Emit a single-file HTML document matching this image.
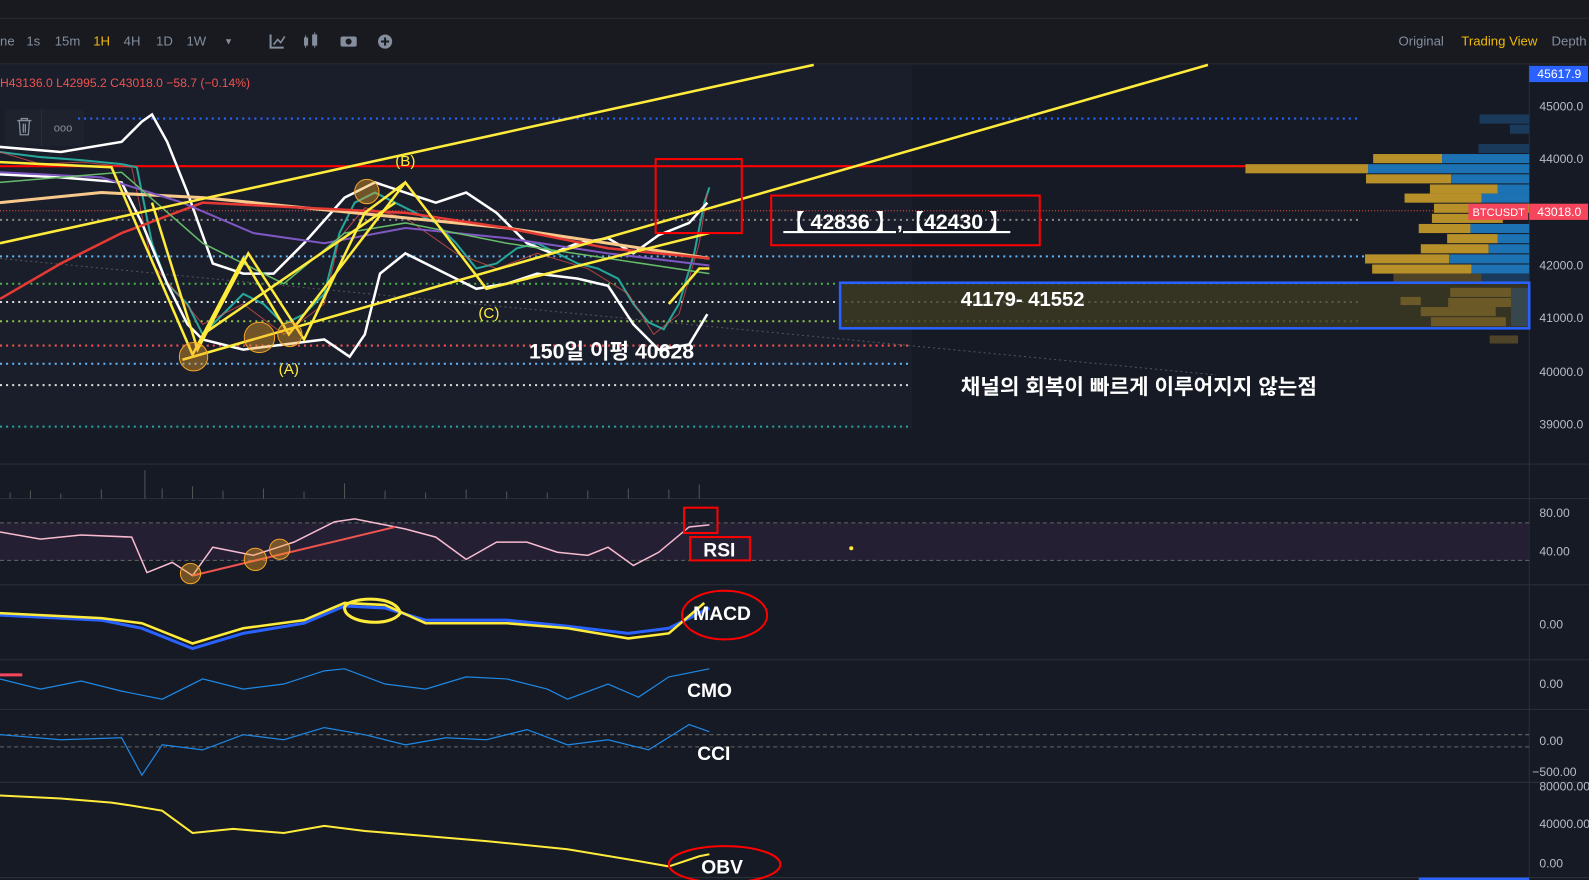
<!DOCTYPE html>
<html><head><meta charset="utf-8"><style>
html,body{margin:0;padding:0;background:#161a25;width:1589px;height:880px;overflow:hidden;font-family:"Liberation Sans","Noto Sans CJK KR",sans-serif}
svg{position:absolute;left:0;top:0;font-family:"Liberation Sans","Noto Sans CJK KR",sans-serif}
</style></head><body>
<svg width="1589" height="880" viewBox="0 0 1568 868.4" preserveAspectRatio="none">
<rect x="0" y="0" width="1568" height="63" fill="#181a20"/>
<line x1="0" y1="18" x2="1568" y2="18" stroke="#2b2f36"/><line x1="0" y1="63" x2="1568" y2="63" stroke="#2b2f36"/>
<g font-size="13" fill="#848e9c"><text x="0" y="45">ne</text><text x="26" y="45">1s</text><text x="54" y="45">15m</text><text x="92" y="45" fill="#f0b90b">1H</text><text x="122" y="45">4H</text><text x="154" y="45">1D</text><text x="184" y="45">1W</text><text x="221" y="44" font-size="9">▼</text>
<text x="1380" y="45">Original</text><text x="1442" y="45" fill="#f0b90b">Trading View</text><text x="1531" y="45">Depth</text></g>
<g fill="#848e9c"><path d="M267 34v13h13" stroke="#848e9c" stroke-width="2" fill="none"/><path d="M270 44l4-5 3 3 4-6" stroke="#848e9c" stroke-width="1.6" fill="none"/>
<rect x="300" y="37" width="4" height="8"/><rect x="308" y="34" width="5" height="11"/><rect x="301" y="35" width="1" height="12"/><rect x="310" y="32" width="1" height="15"/>
<rect x="336" y="36" width="16" height="10" rx="2"/><circle cx="344" cy="41" r="3" fill="#181a20"/>
<circle cx="380" cy="41" r="7"/><path d="M380 37v8M376 41h8" stroke="#181a20" stroke-width="2"/></g>
<rect x="0" y="64" width="1509" height="395" fill="#161a25"/>
<rect x="0" y="64" width="900" height="360" fill="#1a1e2a"/>
<line x1="1509" y1="64" x2="1509" y2="880" stroke="#2b2f36"/>
<g stroke="#2b2f36"><line x1="0" y1="458" x2="1568" y2="458"/><line x1="0" y1="492" x2="1568" y2="492"/><line x1="0" y1="577" x2="1568" y2="577"/><line x1="0" y1="651" x2="1568" y2="651"/><line x1="0" y1="700" x2="1568" y2="700"/><line x1="0" y1="772" x2="1568" y2="772"/><line x1="0" y1="866" x2="1568" y2="866"/></g>
<text x="0" y="86" font-size="12" fill="#ef5350">H43136.0 L42995.2 C43018.0 −58.7 (−0.14%)</text>
<rect x="5" y="108" width="78" height="36" rx="3" fill="#1e222d"/>
<g stroke="#848e9c" stroke-width="1.3" fill="none"><path d="M17 119h14M21 119v-2h6v2M19 119l1 14h8l1-14M23 122v9M25 122v9"/></g>
<line x1="41" y1="108" x2="41" y2="144" stroke="#2b2f36"/>
<text x="53" y="130" font-size="11" fill="#848e9c">ooo</text>
<g stroke-width="2" stroke-dasharray="2 4" fill="none">
<line x1="77" y1="117" x2="1340" y2="117" stroke="#2962ff"/>
<line x1="0" y1="217" x2="1340" y2="217" stroke="#888"/>
<line x1="0" y1="253" x2="1350" y2="253" stroke="#64b5f6"/>
<line x1="0" y1="298" x2="1340" y2="298" stroke="#ddd"/>
<line x1="0" y1="317" x2="1340" y2="317" stroke="#8bc34a"/>
<line x1="0" y1="341" x2="900" y2="341" stroke="#ef5350"/>
<line x1="0" y1="359" x2="900" y2="359" stroke="#64b5f6"/>
<line x1="0" y1="380" x2="900" y2="380" stroke="#ddd"/>
<line x1="0" y1="421" x2="900" y2="421" stroke="#26a69a"/>
<line x1="0" y1="280" x2="1340" y2="280" stroke="#4caf50"/>
</g>
<line x1="0" y1="208" x2="1450" y2="208" stroke="#ef5350" stroke-dasharray="1 2"/>
<line x1="0" y1="164" x2="1509" y2="164" stroke="#f00" stroke-width="2"/>
<line x1="0" y1="255" x2="1200" y2="370" stroke="#555" stroke-dasharray="2 3"/>
<g>
<rect x="1355" y="152" width="68" height="9" fill="#b8902a"/><rect x="1423" y="152" width="86" height="9" fill="#1c72b3"/>
<rect x="1229" y="162" width="121" height="9" fill="#b8902a"/><rect x="1350" y="162" width="159" height="9" fill="#1c72b3"/>
<rect x="1348" y="172" width="84" height="9" fill="#b8902a"/><rect x="1432" y="172" width="77" height="9" fill="#1c72b3"/>
<rect x="1411" y="182" width="67" height="9" fill="#b8902a"/><rect x="1478" y="182" width="31" height="9" fill="#1c72b3"/>
<rect x="1386" y="191" width="76" height="9" fill="#b8902a"/><rect x="1462" y="191" width="47" height="9" fill="#1c72b3"/>
<rect x="1415" y="201" width="94" height="9" fill="#b8902a"/>
<rect x="1413" y="211" width="70" height="9" fill="#b8902a"/>
<rect x="1400" y="221" width="51" height="9" fill="#b8902a"/><rect x="1451" y="221" width="58" height="9" fill="#1c72b3"/>
<rect x="1428" y="231" width="50" height="9" fill="#b8902a"/><rect x="1478" y="231" width="31" height="9" fill="#1c72b3"/>
<rect x="1402" y="241" width="67" height="9" fill="#b8902a"/><rect x="1469" y="241" width="40" height="9" fill="#1c72b3"/>
<rect x="1347" y="251" width="83" height="9" fill="#b8902a"/><rect x="1430" y="251" width="79" height="9" fill="#1c72b3"/>
<rect x="1354" y="261" width="98" height="9" fill="#b8902a"/><rect x="1452" y="261" width="57" height="9" fill="#1c72b3"/>
<rect x="1375" y="270" width="87" height="8" fill="#4f4328"/><rect x="1462" y="270" width="47" height="8" fill="#1a3a5c"/>
<rect x="1460" y="113" width="49" height="9" fill="#1a3a5c"/><rect x="1490" y="123" width="19" height="9" fill="#1a3a5c"/><rect x="1459" y="142" width="50" height="9" fill="#1a3a5c"/>
</g>
<rect x="829" y="279" width="680" height="45" fill="#3d3a22" opacity="0.8"/>
<g fill="#6b5a28"><rect x="1431" y="284" width="60" height="9"/><rect x="1429" y="294" width="66" height="9"/><rect x="1402" y="303" width="74" height="9"/><rect x="1412" y="313" width="74" height="9"/></g>
<rect x="1382" y="293" width="20" height="8" fill="#6b5a28"/><rect x="1491" y="284" width="18" height="38" fill="#37474f"/>
<rect x="1470" y="331" width="28" height="8" fill="#4f4328"/>
<rect x="829" y="279" width="680" height="45" fill="none" stroke="#2962ff" stroke-width="2.5"/>
<path d="M0 150 L40 155 L80 158 L120 162 L135 165 L150 240 L165 280 L185 300 L200 330 L220 310 L240 290 L260 300 L280 320 L300 310 L320 290 L335 230 L350 200 L370 190 L390 200 L410 210 L430 220 L450 240 L470 265 L490 260 L510 245 L530 240 L550 250 L570 260 L590 265 L610 275 L625 300 L640 318 L655 325 L670 300 L685 250 L695 200 L700 185" stroke="#26a69a" stroke-width="2" fill="none"/>
<path d="M0 150 L40 162 L80 160 L130 165 L150 260 L175 290 L200 320 L240 300 L280 330 L320 300 L335 235 L360 205 L400 215 L450 250 L490 265 L530 250 L580 265 L620 290 L645 330 L670 310 L690 240 L698 190" stroke="#ef5350" stroke-width="1" fill="none" opacity="0.7"/>
<path d="M0 145 L60 150 L120 140 L140 120 L150 113 L165 140 L185 190 L210 260 L240 270 L270 270 L300 240 L340 195 L370 180 L400 190 L430 200 L460 190 L490 210 L520 240 L545 250 L570 240 L600 235 L625 250 L650 232 L680 220 L698 200" stroke="#fff" stroke-width="2.5" fill="none"/>
<path d="M0 172 L60 175 L120 180 L140 220 L165 280 L185 320 L200 335 L240 345 L280 340 L320 335 L345 352 L360 330 L375 270 L400 250 L440 270 L470 285 L500 280 L530 270 L570 275 L600 282 L625 320 L650 345 L680 340 L698 310" stroke="#fff" stroke-width="2.5" fill="none"/>
<path d="M0 200 L100 190 L200 195 L300 205 L400 215 L500 225 L600 240 L700 255" stroke="#f8c98a" stroke-width="3" fill="none"/>
<path d="M0 295 L60 260 L120 230 L200 200 L300 205 L400 210 L500 225 L600 245 L700 255" stroke="#e53935" stroke-width="2.5" fill="none"/>
<path d="M0 170 L100 175 L180 200 L250 230 L320 240 L400 225 L500 235 L600 250 L700 262" stroke="#7e57c2" stroke-width="2" fill="none"/>
<path d="M0 180 L120 170 L200 240 L280 280 L340 230 L400 220 L500 240 L600 255 L700 270" stroke="#66bb6a" stroke-width="1.5" fill="none"/>
<g stroke="#ffeb3b" stroke-width="2.5" fill="none">
<line x1="0" y1="240" x2="803" y2="64"/>
<line x1="180" y1="355" x2="1192" y2="64"/>
<path d="M0 160 L110 165 L190 350 L240 255 L285 330 L400 180 L480 285 L700 230"/>
<path d="M150 200 L195 345 L245 250 L300 335 L360 210 L400 180"/>
<line x1="200" y1="330" x2="390" y2="200"/>
<path d="M660 300 L690 265 L700 265"/>
</g>
<g fill="#f5a623" fill-opacity="0.4" stroke="#f5a623"><circle cx="191" cy="352" r="14"/><circle cx="256" cy="333" r="15"/><circle cx="286" cy="330" r="12"/><circle cx="362" cy="189" r="12"/></g>
<g fill="#ffeb3b" font-size="15"><text x="390" y="164">(B)</text><text x="472" y="314">(C)</text><text x="275" y="369">(A)</text></g>
<rect x="647" y="157" width="85" height="73" fill="none" stroke="#f00" stroke-width="2"/>
<rect x="761" y="193" width="265" height="49" fill="none" stroke="#f00" stroke-width="2"/>
<text x="773" y="226" font-size="21" fill="#fff" font-weight="bold" text-decoration="underline">【 42836 】,【42430 】</text>
<text x="948" y="302" font-size="20" fill="#fff" font-weight="bold">41179- 41552</text>
<text x="522" y="354" font-size="21" fill="#fff" font-weight="bold">150일 이평 40628</text>
<text x="948" y="389" font-size="21" fill="#fff" font-weight="bold">채널의 회복이 빠르게 이루어지지 않는점</text>
<g font-size="12" fill="#b7bdc6"><text x="1519" y="109">45000.0</text><text x="1519" y="161">44000.0</text><text x="1519" y="266">42000.0</text><text x="1519" y="318">41000.0</text><text x="1519" y="371">40000.0</text><text x="1519" y="423">39000.0</text>
<text x="1519" y="510">80.00</text><text x="1519" y="548">40.00</text><text x="1519" y="620">0.00</text><text x="1519" y="679">0.00</text><text x="1519" y="735">0.00</text><text x="1512" y="766">−500.00</text><text x="1519" y="780">80000.00</text><text x="1519" y="817">40000.00</text><text x="1519" y="856">0.00</text></g>
<rect x="1509" y="65" width="58" height="16" fill="#2962ff"/><text x="1517" y="77" font-size="12" fill="#fff">45617.9</text>
<rect x="1509" y="201" width="58" height="16" fill="#f6465d"/><text x="1517" y="213" font-size="12" fill="#fff">43018.0</text>
<rect x="1449" y="201" width="59" height="16" fill="#f6465d"/><text x="1453" y="213" font-size="11" fill="#fff">BTCUSDT</text>
<g stroke="#555" stroke-width="1"><path d="M10 492v-6M30 492v-8M60 492v-5M100 492v-9M143 492v-28M160 492v-10M190 492v-12M220 492v-8M260 492v-10M300 492v-7M340 492v-15M380 492v-8M420 492v-6M460 492v-9M500 492v-7M540 492v-6M580 492v-8M620 492v-10M660 492v-9M690 492v-14"/></g>
<rect x="0" y="516" width="1509" height="37" fill="#241f33"/>
<line x1="0" y1="516" x2="1509" y2="516" stroke="#666" stroke-dasharray="4 3"/><line x1="0" y1="553" x2="1509" y2="553" stroke="#666" stroke-dasharray="4 3"/>
<path d="M0 525 L40 532 L80 528 L130 530 L145 565 L170 555 L190 568 L210 540 L250 548 L290 535 L330 515 L350 512 L380 518 L400 522 L430 530 L460 552 L490 535 L520 535 L550 545 L580 548 L600 540 L625 558 L650 545 L680 520 L700 518" stroke="#f8bbd0" stroke-width="1.5" fill="none"/>
<line x1="190" y1="568" x2="390" y2="520" stroke="#ef5350" stroke-width="2"/>
<g fill="#f5a623" fill-opacity="0.4" stroke="#f5a623"><circle cx="188" cy="566" r="10"/><circle cx="252" cy="552" r="11"/><circle cx="276" cy="542" r="10"/></g>
<rect x="675" y="501" width="33" height="25" fill="none" stroke="#f00" stroke-width="2"/>
<rect x="681" y="530" width="59" height="23" fill="none" stroke="#f00" stroke-width="2"/>
<text x="694" y="549" font-size="19" fill="#fff" font-weight="bold">RSI</text>
<circle cx="840" cy="541" r="2" fill="#ffeb3b"/>
<path d="M0 607 L100 612 L140 620 L190 640 L240 625 L300 615 L340 598 L380 600 L420 612 L500 612 L560 618 L620 625 L660 620 L700 600" stroke="#2962ff" stroke-width="3" fill="none"/>
<path d="M0 605 L100 610 L140 615 L190 635 L240 620 L300 612 L340 595 L380 597 L420 615 L500 615 L560 620 L620 630 L660 625 L695 595" stroke="#ffeb3b" stroke-width="2.5" fill="none"/>
<path d="M340 600 C340 590 390 585 395 605 C385 620 340 615 340 600" stroke="#ffeb3b" stroke-width="3" fill="none"/>
<ellipse cx="715" cy="607" rx="42" ry="24" fill="none" stroke="#f00" stroke-width="2"/>
<text x="684" y="612" font-size="19" fill="#fff" font-weight="bold">MACD</text>
<path d="M0 670 L40 680 L80 672 L120 682 L160 690 L200 670 L240 680 L280 675 L320 662 L340 660 L380 675 L420 680 L460 668 L500 670 L540 680 L560 690 L600 675 L630 688 L660 668 L700 660" stroke="#1e88e5" stroke-width="1.2" fill="none"/>
<line x1="0" y1="666" x2="22" y2="666" stroke="#f6465d" stroke-width="3"/>
<text x="678" y="688" font-size="19" fill="#fff" font-weight="bold">CMO</text>
<line x1="0" y1="725" x2="1509" y2="725" stroke="#666" stroke-dasharray="4 3"/><line x1="0" y1="737" x2="1509" y2="737" stroke="#666" stroke-dasharray="4 3"/>
<path d="M0 725 L60 730 L120 728 L140 765 L160 735 L200 740 L240 725 L280 730 L320 718 L360 725 L400 735 L440 728 L480 730 L520 720 L560 735 L600 730 L640 740 L680 715 L700 722" stroke="#1e88e5" stroke-width="1.2" fill="none"/>
<text x="688" y="750" font-size="19" fill="#fff" font-weight="bold">CCI</text>
<path d="M0 785 L60 788 L110 792 L130 795 L160 800 L190 822 L230 818 L280 822 L320 815 L360 820 L420 825 L480 830 L560 838 L620 848 L660 855 L690 845 L700 843" stroke="#ffeb3b" stroke-width="2" fill="none"/>
<ellipse cx="715" cy="853" rx="55" ry="18" fill="none" stroke="#f00" stroke-width="2"/>
<text x="692" y="862" font-size="19" fill="#fff" font-weight="bold">OBV</text>
<rect x="1400" y="866" width="109" height="3" fill="#2962ff"/>
</svg>
</body></html>
